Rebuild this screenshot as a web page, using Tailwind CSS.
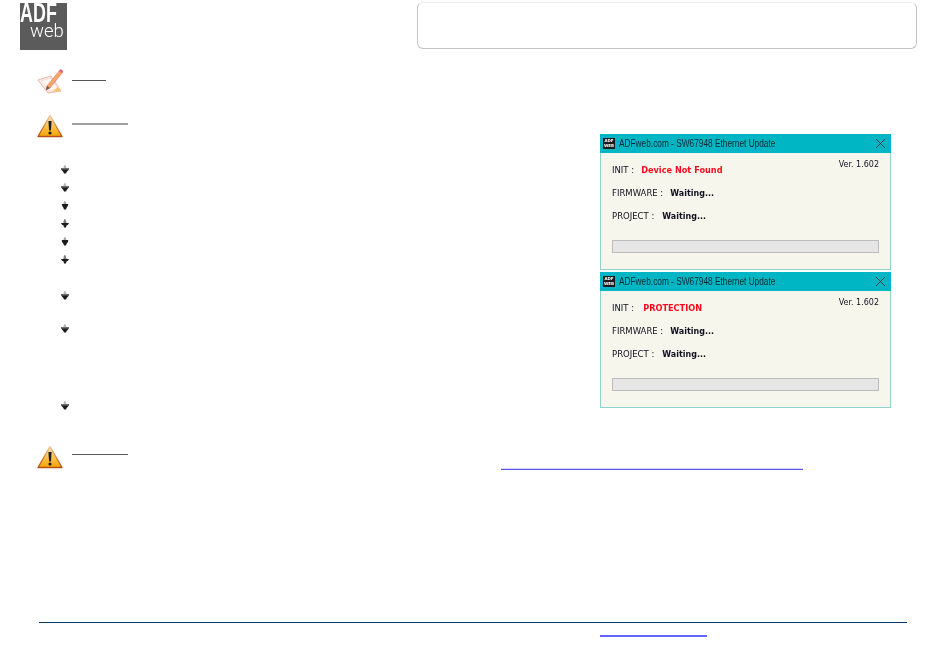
<!DOCTYPE html>
<html lang="en">
<head>
<meta charset="UTF-8">
<title>ADFweb - SW67948 Ethernet Update</title>
<script src="https://cdn.jsdelivr.net/npm/@tailwindcss/browser@4"></script>
</head>
<body class="bg-white">
<div class="w-[950px] h-[654px] flex flex-col overflow-hidden font-['Liberation_Sans',sans-serif]">

  <!-- header -->
  <div class="h-[52px] flex items-start">
    <div class="relative w-[47px] h-[47px] ml-[20px] mt-[3px] bg-[#5b5b5b] blur-[0.3px]">
      <span class="absolute left-0 top-0 h-[20px] text-[28px] leading-[20px] font-bold text-white origin-left scale-x-[.64] whitespace-nowrap">ADF</span>
      <span class="absolute left-[10px] top-[21px] text-[18.5px] leading-[14px] font-light text-white font-['Roboto',sans-serif]">web</span>
    </div>
    <div class="w-[500px] h-[47px] ml-[350px] mt-[2px] rounded-[6px] border border-[#c4c4c4] border-t-[#ececec]"></div>
  </div>

  <!-- notes and dialogs -->
  <div class="h-[393px] flex">
    <div class="w-[600px] pl-[37px]">
      <div class="flex items-start h-[62px] pt-[16px]">
        <svg class="w-[26px] h-[26px] shrink-0" viewBox="0 0 26 26">
          <path d="M1 12 L14 8 L24 23 L11 25 Z" fill="#fdeee6" stroke="#f0b4ac"/>
          <path d="M4 13 L14 10 L21 21 L12 23 Z" fill="#fff8f2" stroke="#f4cfc4" stroke-width=".6"/>
          <path d="M10 18 L23 2 L26 4 L13 20 L9 22 Z" fill="#f2a868" stroke="#e07c72" stroke-width=".7"/>
          <path d="M22 3 L24 1 L26 3 L25 5 Z" fill="#e2607a"/>
          <path d="M9 22 L10 18 L13 20 Z" fill="#6a5a50"/>
          <path d="M15 24 L24 23 L21 19 Z" fill="#f6c56d"/>
        </svg>
        <div class="w-[34px] h-[1px] ml-[9px] mt-[12px] bg-[#555555]"></div>
      </div>
      <div class="flex items-start h-[38px]">
        <svg class="w-[26px] h-[24px] shrink-0" viewBox="0 0 26 24">
          <defs>
            <linearGradient id="warn" x1="0" y1="0" x2="0" y2="1">
              <stop offset="0" stop-color="#fbe3b4"/>
              <stop offset=".5" stop-color="#f9c45a"/>
              <stop offset="1" stop-color="#f4a500"/>
            </linearGradient>
            <linearGradient id="warnEdge" x1="0" y1="0" x2="0" y2="1">
              <stop offset="0" stop-color="#f0c8a0"/>
              <stop offset=".6" stop-color="#d07a30"/>
              <stop offset="1" stop-color="#b5501a"/>
            </linearGradient>
          </defs>
          <path d="M13 1.5 L25 22.5 L1 22.5 Z" fill="url(#warn)" stroke="url(#warnEdge)" stroke-width="1.4" stroke-linejoin="round"/>
          <path d="M11.4 7 H14.6 L13.9 16.5 H12.1 Z" fill="#1c1c1c"/>
          <circle cx="13" cy="19" r="1.6" fill="#1c1c1c"/>
        </svg>
        <div class="w-[56px] h-[2px] ml-[9px] mt-[9px] bg-[#a0a0a0]"></div>
      </div>
      <ul class="pl-[24px] pt-[13px]">
        <li class="h-[18px]"><svg class="w-[8px] h-[9px]" viewBox="0 0 8 9"><path d="M0 3 H8 L7.5 5 L5.8 6.8 L5 8.5 H3 L2.2 6.8 L.5 5 Z" fill="#1c1c1c"/><path d="M0 3 H8 L7.6 4.4 H.4 Z" fill="#6e6e6e"/><path d="M3 .3 L4.5 .3 L5.5 3 H2.5 Z" fill="#b5b5b5"/></svg></li>
        <li class="h-[18px]"><svg class="w-[8px] h-[9px]" viewBox="0 0 8 9"><path d="M0 3 H8 L7.5 5 L5.8 6.8 L5 8.5 H3 L2.2 6.8 L.5 5 Z" fill="#1c1c1c"/><path d="M0 3 H8 L7.6 4.4 H.4 Z" fill="#6e6e6e"/><path d="M3 .3 L4.5 .3 L5.5 3 H2.5 Z" fill="#b5b5b5"/></svg></li>
        <li class="h-[18px]"><svg class="w-[8px] h-[9px]" viewBox="0 0 8 9"><path d="M.8 3 H7.2 L6.8 5 L5.6 6.8 L5 8.5 H3 L2.4 6.8 L1.2 5 Z" fill="#1c1c1c"/><path d="M3 .3 L4.5 .3 L5.5 3 H2.5 Z" fill="#a5a5a5"/></svg></li>
        <li class="h-[18px]"><svg class="w-[8px] h-[9px]" viewBox="0 0 8 9"><path d="M0 4 H8 L7 5.8 L5.4 6.4 L5 8.5 H3 L2.6 6.4 L1 5.8 Z" fill="#1c1c1c"/><path d="M3 .3 L4.5 .3 L5.6 4 H2.4 Z" fill="#7d7d7d"/></svg></li>
        <li class="h-[18px]"><svg class="w-[8px] h-[9px]" viewBox="0 0 8 9"><path d="M.8 3 H7.2 L7 5 L5.6 6.8 L5 8.5 H3 L2.4 6.8 L1 5 Z" fill="#1c1c1c"/><path d="M3 .3 L4.5 .3 L5.5 3 H2.5 Z" fill="#a5a5a5"/></svg></li>
        <li class="h-[36px]"><svg class="w-[8px] h-[9px]" viewBox="0 0 8 9"><path d="M0 4 H8 L7 5.8 L5.4 6.4 L5 8.5 H3 L2.6 6.4 L1 5.8 Z" fill="#1c1c1c"/><path d="M3 .3 L4.5 .3 L5.6 4 H2.4 Z" fill="#7d7d7d"/></svg></li>
        <li class="h-[33px]"><svg class="w-[8px] h-[9px]" viewBox="0 0 8 9"><path d="M0 3 H8 L7.5 5 L5.8 6.8 L5 8.5 H3 L2.2 6.8 L.5 5 Z" fill="#1c1c1c"/><path d="M0 3 H8 L7.6 4.4 H.4 Z" fill="#6e6e6e"/><path d="M3 .3 L4.5 .3 L5.5 3 H2.5 Z" fill="#b5b5b5"/></svg></li>
        <li class="h-[77px]"><svg class="w-[8px] h-[9px]" viewBox="0 0 8 9"><path d="M0 3 H8 L7.5 5 L5.8 6.8 L5 8.5 H3 L2.2 6.8 L.5 5 Z" fill="#1c1c1c"/><path d="M0 3 H8 L7.6 4.4 H.4 Z" fill="#6e6e6e"/><path d="M3 .3 L4.5 .3 L5.5 3 H2.5 Z" fill="#b5b5b5"/></svg></li>
        <li class="h-[18px]"><svg class="w-[8px] h-[9px]" viewBox="0 0 8 9"><path d="M0 3 H8 L7.5 5 L5.8 6.8 L5 8.5 H3 L2.2 6.8 L.5 5 Z" fill="#1c1c1c"/><path d="M0 3 H8 L7.6 4.4 H.4 Z" fill="#6e6e6e"/><path d="M3 .3 L4.5 .3 L5.5 3 H2.5 Z" fill="#b5b5b5"/></svg></li>
      </ul>
    </div>

    <div class="w-[291px] pt-[82px] flex flex-col gap-[2px]">
      <!-- dialog: device not found -->
      <div class="h-[136px] bg-[#f7f6ed] border-x border-b border-[#8fd3cf] font-['DejaVu_Sans',sans-serif] text-[8.5px] text-[#101020] blur-[0.3px]">
        <div class="h-[19px] -mx-px bg-[#00b6c4] flex items-center pl-[3px] pr-[6px]">
          <div class="w-[12px] h-[11px] bg-[#1a1a1a] text-white text-[4px] leading-[5px] font-bold text-center shrink-0">ADF<br>WEB</div>
          <span class="ml-[4px] text-[10px] text-[#0a2a30] font-['Liberation_Sans',sans-serif] origin-left scale-x-[.83] whitespace-nowrap">ADFweb.com - SW67948 Ethernet Update</span>
          <svg class="w-[9px] h-[9px] ml-auto" viewBox="0 0 9 9"><path d="M0 0 L9 9 M9 0 L0 9" stroke="#22333a" stroke-width=".9"/></svg>
        </div>
        <div class="flex justify-end pr-[11px] pt-[6px] h-[13px] leading-[11px] text-[8px]">Ver. 1.602</div>
        <div class="pl-[11px] h-[23px] leading-[9px] flex">INIT :<span class="ml-[7px] font-bold text-[8.2px] text-[#fa0a1e]">Device Not Found</span></div>
        <div class="pl-[11px] h-[23px] flex leading-[9px]">FIRMWARE :<span class="ml-[7px] font-bold text-[8px]">Waiting...</span></div>
        <div class="pl-[11px] h-[28px] flex leading-[9px]">PROJECT :<span class="ml-[8px] font-bold text-[8px]">Waiting...</span></div>
        <div class="ml-[11px] w-[267px] h-[13px] bg-[#e6e6e6] border border-[#bcbcbc]"></div>
      </div>
      <!-- dialog: protection -->
      <div class="h-[136px] bg-[#f7f6ed] border-x border-b border-[#8fd3cf] font-['DejaVu_Sans',sans-serif] text-[8.5px] text-[#101020] blur-[0.3px]">
        <div class="h-[19px] -mx-px bg-[#00b6c4] flex items-center pl-[3px] pr-[6px]">
          <div class="w-[12px] h-[11px] bg-[#1a1a1a] text-white text-[4px] leading-[5px] font-bold text-center shrink-0">ADF<br>WEB</div>
          <span class="ml-[4px] text-[10px] text-[#0a2a30] font-['Liberation_Sans',sans-serif] origin-left scale-x-[.83] whitespace-nowrap">ADFweb.com - SW67948 Ethernet Update</span>
          <svg class="w-[9px] h-[9px] ml-auto" viewBox="0 0 9 9"><path d="M0 0 L9 9 M9 0 L0 9" stroke="#22333a" stroke-width=".9"/></svg>
        </div>
        <div class="flex justify-end pr-[11px] pt-[6px] h-[13px] leading-[11px] text-[8px]">Ver. 1.602</div>
        <div class="pl-[11px] h-[23px] leading-[9px] flex">INIT :<span class="ml-[9px] font-bold text-[8.2px] text-[#fa0a1e]">PROTECTION</span></div>
        <div class="pl-[11px] h-[23px] flex leading-[9px]">FIRMWARE :<span class="ml-[7px] font-bold text-[8px]">Waiting...</span></div>
        <div class="pl-[11px] h-[28px] flex leading-[9px]">PROJECT :<span class="ml-[8px] font-bold text-[8px]">Waiting...</span></div>
        <div class="ml-[11px] w-[267px] h-[13px] bg-[#e6e6e6] border border-[#bcbcbc]"></div>
      </div>
    </div>
  </div>

  <!-- second warning -->
  <div class="h-[177px] pl-[37px] flex items-start">
    <svg class="w-[26px] h-[24px] shrink-0" viewBox="0 0 26 24">
      <path d="M13 1.5 L25 22.5 L1 22.5 Z" fill="url(#warn)" stroke="url(#warnEdge)" stroke-width="1.4" stroke-linejoin="round"/>
      <path d="M11.4 7 H14.6 L13.9 16.5 H12.1 Z" fill="#1c1c1c"/>
      <circle cx="13" cy="19" r="1.6" fill="#1c1c1c"/>
    </svg>
    <div class="w-[56px] h-[1px] ml-[9px] mt-[9px] bg-[#555555]"></div>
    <div class="w-[302px] h-[2px] ml-[373px] mt-[23px] bg-[#5a5aee] border-t border-[#d4d4ff]"></div>
  </div>

  <!-- footer -->
  <div class="ml-[39px] w-[868px] h-[1px] bg-[#003a70]"></div>
  <div class="w-[107px] h-[2px] ml-[600px] mt-[12px] bg-[#6464ff]"></div>
</div>
</body>
</html>
